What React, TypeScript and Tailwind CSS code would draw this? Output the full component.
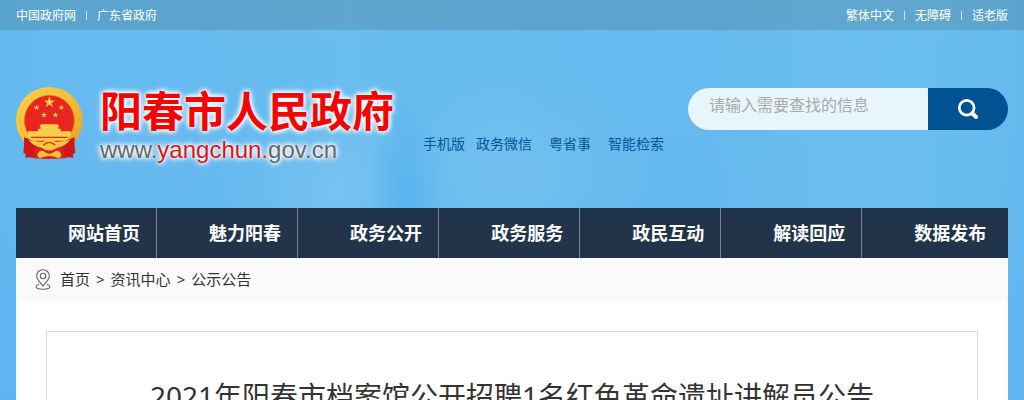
import { Fragment } from 'react'

const topLinks = ['中国政府网', '广东省政府']
const toolLinks = ['繁体中文', '无障碍', '适老版']
const navItems = ['网站首页', '魅力阳春', '政务公开', '政务服务', '政民互动', '解读回应', '数据发布']
const crumbs = ['首页', '资讯中心', '公示公告']

const STAR = 'M0,-10 2.3,-3.1 9.5,-3.1 3.7,1.2 5.9,8.1 0,3.8 -5.9,8.1 -3.7,1.2 -9.5,-3.1 -2.3,-3.1Z'

function Emblem() {
  return (
    <svg viewBox="18 15 204 219" className="h-[73px] w-[68px] shrink-0" aria-hidden="true">
      <defs>
        <linearGradient id="gold" x1="0" y1="0" x2="1" y2="1">
          <stop offset="0" stopColor="#fbd24b" />
          <stop offset="0.5" stopColor="#f6bd35" />
          <stop offset="1" stopColor="#e2a022" />
        </linearGradient>
      </defs>
      <circle cx="118" cy="115" r="100" fill="url(#gold)" />
      <circle cx="118" cy="115" r="88" fill="none" stroke="#eaae2c" strokeWidth="2" strokeDasharray="9 7" />
      <circle cx="118" cy="115" r="75" fill="#e8251f" stroke="#c98a1c" strokeWidth="2" />
      <g fill="#fbce48">
        <path d={STAR} transform="translate(118 61) scale(1.8)" />
        <path d={STAR} transform="translate(80 77) scale(.95)" />
        <path d={STAR} transform="translate(154 77) scale(.95)" />
        <path d={STAR} transform="translate(102 99) scale(.95)" />
        <path d={STAR} transform="translate(136 99) scale(.95)" />
        <path d="M93 127 H143 L148 136 H144 V146 H92 V136 H88 Z" />
        <path d="M84 140 H152 V148 H182 V164 H54 V148 H84 Z" />
        <path d="M58 168 H178 L172 176 H64 Z" />
      </g>
      <path d="M42 166 Q66 172 84 186 Q76 200 80 230 Q60 222 46 228 Q50 214 40 212 Q44 190 42 166 Z" fill="#cf171b" />
      <path d="M194 166 Q170 172 152 186 Q160 200 156 230 Q176 222 190 228 Q186 214 196 212 Q192 190 194 166 Z" fill="#cf171b" />
      <path d="M76 182 Q118 200 160 182 L164 228 Q118 234 72 228 Z" fill="#dd211e" />
      <path d="M54 172 Q88 184 104 177 Q118 168 132 177 Q148 184 182 172 Q164 195 142 197 Q118 214 94 197 Q72 195 54 172 Z" fill="#f9c640" />
      <path d="M100 190 Q118 172 136 190" fill="none" stroke="#e02a1e" strokeWidth="4" />
      <path d="M82 216 Q92 200 104 210 Q118 220 132 210 Q144 200 154 216 Q152 230 144 228 Q118 216 92 228 Q84 230 82 216 Z" fill="#f8c03a" />
    </svg>
  )
}

function SearchIcon() {
  return (
    <svg viewBox="0 0 22 22" className="size-[22px]" fill="none" stroke="#fff" aria-hidden="true">
      <circle cx="9.7" cy="9.7" r="7.4" strokeWidth="2.7" />
      <path d="M15.5 15.5 L19 19" strokeWidth="4" strokeLinecap="round" />
    </svg>
  )
}

function PinIcon() {
  return (
    <svg viewBox="0 0 16 21" className="h-[21px] w-4" fill="none" stroke="#666" strokeWidth="1.1" aria-hidden="true">
      <path d="M8 17.2 C5 13.2 1.6 10 1.6 6.9 A6.4 6.2 0 0 1 14.4 6.9 C14.4 10 11 13.2 8 17.2 Z" />
      <circle cx="8" cy="7" r="2.7" />
      <path d="M4.2 15.2 C0.6 16 .4 18.2 2.2 19.2 C5 20.6 11 20.6 13.8 19.2 C15.6 18.2 15.4 16 11.8 15.2" />
    </svg>
  )
}

function BarLinks({ items }: { items: string[] }) {
  return (
    <div className="flex items-center gap-[10px]">
      {items.map((item, i) => (
        <Fragment key={item}>
          {i > 0 && <span className="h-[9px] w-px bg-white/70" />}
          <a href="#">{item}</a>
        </Fragment>
      ))}
    </div>
  )
}

export default function App() {
  return (
    <div className="min-h-screen bg-[radial-gradient(36px_110px_at_39.5%_190px,#55b1edcc,transparent),radial-gradient(90px_110px_at_33%_190px,#80c6f099,transparent),radial-gradient(140px_120px_at_50%_170px,#7cc4ef88,transparent),linear-gradient(90deg,#5ab9ee66_0%,transparent_4%,transparent_20%,#70c1ee66_34%,#6ac0ee44_41%,#64b9ef22_60%,transparent_70%,#74c5ee55_80%,#6fc2ee66_92%,#62b7ec44_100%),linear-gradient(180deg,#65bbef_0%,#66b9ef_50%,#60b1f3_100%)] font-['Noto_Sans','Noto_Sans_CJK_SC',sans-serif] text-[#333]">
      <div className="flex h-[30px] items-center justify-between bg-[#364a4a]/20 px-4 pt-px text-xs text-white">
        <BarLinks items={topLinks} />
        <BarLinks items={toolLinks} />
      </div>

      <div className="px-4">
        <header className="flex h-[178px] items-start pt-[57px]">
          <a href="#" className="flex items-start gap-4">
            <Emblem />
            <div className="[text-shadow:0_0_2px_#fff,0_0_4px_#fff,0_0_6px_#fff,0_0_6px_#fff]">
              <h1 className="text-[42px] leading-[48px] font-bold text-[#f50404]">阳春市人民政府</h1>
              <p className="font-['Liberation_Sans',sans-serif] text-2xl leading-[30px] text-[#666]">
                www.<span className="text-[#d81418]">yangchun.</span>gov.cn
              </p>
            </div>
          </a>
          <nav className="mt-[46px] ml-[29px] flex text-sm leading-[22px] whitespace-nowrap text-[#07549a]">
            <a href="#" className="mr-[11px]">手机版</a>
            <a href="#" className="mr-[17px]">政务微信</a>
            <a href="#" className="mr-[17px]">粤省事</a>
            <a href="#">智能检索</a>
          </nav>
          <form className="mt-px ml-auto flex h-[42px] w-80 overflow-hidden rounded-full">
            <input
              type="text"
              aria-label="搜索"
              placeholder="请输入需要查找的信息"
              className="min-w-0 flex-1 bg-white/85 pb-2 pl-[21px] text-base outline-none placeholder:text-[#a9a9a9]"
            />
            <button type="button" aria-label="搜索" className="flex w-20 items-center justify-center bg-[#005293]">
              <SearchIcon />
            </button>
          </form>
        </header>

        <nav className="flex h-[50px] bg-[#223449] text-lg font-bold text-white">
          {navItems.map((item) => (
            <a
              key={item}
              href="#"
              className="flex w-[14.22%] items-center border-r border-[#7a8591] pl-[52px] whitespace-nowrap last:flex-1 last:border-r-0"
            >
              {item}
            </a>
          ))}
        </nav>

        <main className="bg-white">
          <div className="flex h-[43px] items-center bg-[#fafafa] pl-[19px] text-[15px]">
            <PinIcon />
            <div className="ml-[9px] flex gap-[6px]">
              {crumbs.map((crumb, i) => (
                <Fragment key={crumb}>
                  {i > 0 && <span>&gt;</span>}
                  <a href="#">{crumb}</a>
                </Fragment>
              ))}
            </div>
          </div>
          <div className="p-[30px] pb-0">
            <article className="h-[69px] overflow-hidden border border-b-0 border-[#d9d9d9] pt-11 text-center">
              <h2 className="text-[28px] leading-10 whitespace-nowrap">
                2021年阳春市档案馆公开招聘1名红色革命遗址讲解员公告
              </h2>
            </article>
          </div>
        </main>
      </div>
    </div>
  )
}
